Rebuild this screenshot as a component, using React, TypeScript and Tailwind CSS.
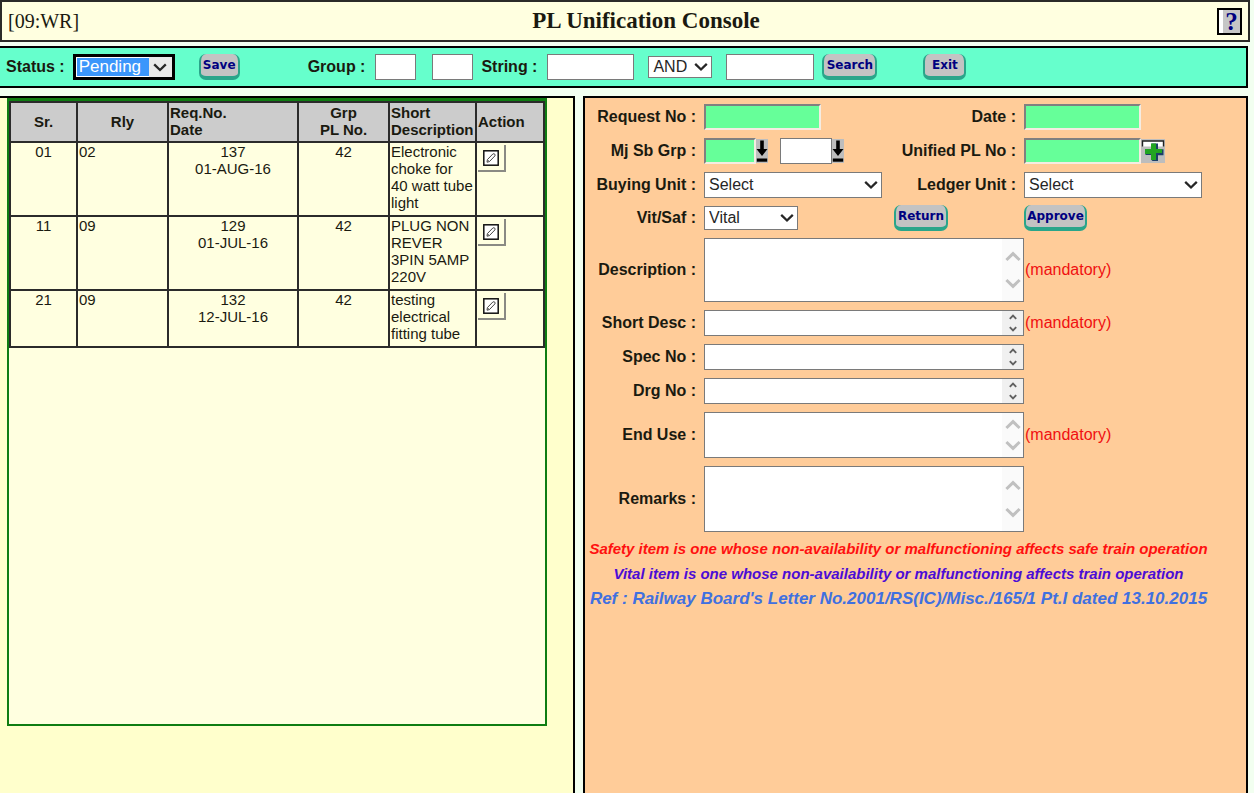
import React from "react";

const fieldBase = "border border-[#7a7a7a] bg-white px-1 outline-none";
const sunken =
  "border-2 border-t-[#808080] border-l-[#808080] border-b-[#f5ece2] border-r-[#f5ece2] bg-[#66ff99] px-1 outline-none";

function Chevron({ className }: { className: string }) {
  return (
    <svg viewBox="0 0 14 9" className={className} fill="none" stroke="#262626" strokeWidth="2.3" aria-hidden="true">
      <path d="M1.2 1.4 7 7l5.8-5.6" />
    </svg>
  );
}

function Select({
  label,
  id,
  options,
  box,
}: {
  label?: string;
  id: string;
  options: string[];
  box: string;
}) {
  return (
    <div className={`relative ${box}`}>
      <select
        id={id}
        aria-label={label}
        className="block h-full w-full appearance-none border border-[#7a7a7a] bg-white pr-6 pl-1 text-[16px] leading-5 text-[#262626] outline-none"
      >
        {options.map((o) => (
          <option key={o}>{o}</option>
        ))}
      </select>
      <Chevron className="pointer-events-none absolute top-1/2 right-1 h-[9px] w-[14px] -translate-y-1/2" />
    </div>
  );
}

function PushButton({ children, className = "" }: { children: string; className?: string }) {
  return (
    <button
      type="button"
      className={`h-[26px] rounded-[7px] border-r-2 border-b-4 border-l-2 border-[#2aa58a] bg-[#c3c3c3] pt-px text-center font-['DejaVu_Sans',sans-serif] text-[12px] leading-[21px] font-bold text-[#000080] ${className}`}
    >
      {children}
    </button>
  );
}

function ScrollArea({ id, box, small = false }: { id: string; box: string; small?: boolean }) {
  return (
    <div className={`relative col-span-2 ${box}`}>
      <textarea
        id={id}
        className="block h-full w-full resize-none overflow-hidden border border-[#7a7a7a] bg-white py-0.5 pr-6 pl-1 text-[16px] leading-5 outline-none"
      />
      <div
        className={`pointer-events-none absolute inset-y-px right-px flex w-[21px] flex-col items-center ${
          small ? "justify-between bg-[#f0f0f0] py-[3px]" : "justify-evenly gap-1 bg-[#fafafa]"
        }`}
      >
        {small ? (
          <>
            <svg viewBox="0 0 8 6" className="h-[6px] w-[8px]" fill="none" stroke="#606060" strokeWidth="1.9" aria-hidden="true">
              <path d="M.8 4.8 4 1.6l3.2 3.2" />
            </svg>
            <svg viewBox="0 0 8 6" className="h-[6px] w-[8px]" fill="none" stroke="#606060" strokeWidth="1.9" aria-hidden="true">
              <path d="M.8 1.2 4 4.4l3.2-3.2" />
            </svg>
          </>
        ) : (
          <>
            <svg viewBox="0 0 16 11" className="h-[11px] w-[16px]" fill="none" stroke="#c0c0c0" strokeWidth="3" aria-hidden="true">
              <path d="M1.4 9 8 2.6 14.6 9" />
            </svg>
            <svg viewBox="0 0 16 11" className="h-[11px] w-[16px]" fill="none" stroke="#c0c0c0" strokeWidth="3" aria-hidden="true">
              <path d="M1.4 2 8 8.4 14.6 2" />
            </svg>
          </>
        )}
      </div>
    </div>
  );
}

function PickButton({ label }: { label: string }) {
  return (
    <button type="button" aria-label={label} className="h-[24px] w-[12px] bg-[#bdbdbd]">
      <svg viewBox="0 0 12 24" className="block h-[24px] w-[12px]" fill="#000" aria-hidden="true">
        <path d="M4.200 1.500h3.600V10H11.500L6 17 .5 10h3.700z" />
        <path d="M.800 19.500h10.400v3.200H.8z" />
      </svg>
    </button>
  );
}

function Label({ htmlFor, children }: { htmlFor: string; children: string }) {
  return (
    <label htmlFor={htmlFor} className="pr-2 text-right font-bold whitespace-nowrap">
      {children} :
    </label>
  );
}

const Mandatory = () => <span className="pl-px text-[#f01010]">(mandatory)</span>;

const rows = [
  { sr: "01", rly: "02", req: "137", date: "01-AUG-16", grp: "42", desc: ["Electronic", "choke for", "40 watt tube", "light"] },
  { sr: "11", rly: "09", req: "129", date: "01-JUL-16", grp: "42", desc: ["PLUG NON", "REVER", "3PIN 5AMP", "220V"] },
  { sr: "21", rly: "09", req: "132", date: "12-JUL-16", grp: "42", desc: ["testing", "electrical", "fitting tube"] },
];

const cell = "border-2 border-[#2b2b2b] px-px pb-1 pt-0 align-top";
const head = "border-2 border-[#2b2b2b] px-px pt-px pb-[3px] font-bold";

export default function App() {
  return (
    <div className="flex min-h-screen flex-col bg-[#f2fff0] font-['Liberation_Sans',Arial,sans-serif] text-[16px] leading-5 text-[#1a1a10]">
      <header className="mr-1 flex h-[42px] items-center border-2 border-[#2b2b28] bg-[#ffffe0] pr-1.5 pl-1.5 font-['Liberation_Serif',serif]">
        <span className="flex-1 text-[20px]">[09:WR]</span>
        <h1 className="ml-[42px] text-[23px] font-bold text-[#1a1a10]">PL Unification Console</h1>
        <div className="flex flex-1 justify-end">
          <button
            type="button"
            aria-label="Help"
            className="flex h-[27px] w-[25px] border-2 border-black bg-white pl-1"
          >
            <span className="h-full flex-1 bg-[#c6c6c6] text-center text-[25px] leading-[23px] font-bold text-[#000080]">?</span>
          </button>
        </div>
      </header>

      <form
        className="mt-1 mr-1.5 flex h-[42px] items-center border-y-2 border-r-2 border-black bg-[#66ffcc] pl-1.5 font-bold"
        onSubmit={(e) => e.preventDefault()}
      >
        <label htmlFor="status">Status :</label>
        <div className="relative ml-2 h-[26px] w-[102px] border-[3px] border-black bg-white p-px">
          <select
            id="status"
            className="block h-full w-[72px] appearance-none bg-[#3b96fb] pl-0.5 text-[17px] leading-[18px] font-normal text-white outline-none"
          >
            <option>Pending</option>
          </select>
          <div className="pointer-events-none absolute inset-y-0 right-0 flex w-[23px] items-center justify-center bg-[#e9e9e9]">
            <Chevron className="h-[9px] w-[14px]" />
          </div>
        </div>
        <PushButton className="ml-6 w-[41px]">Save</PushButton>
        <label htmlFor="group" className="ml-[68px]">Group :</label>
        <input id="group" type="text" className={`${fieldBase} ml-2.5 h-[26px] w-[41px]`} />
        <input aria-label="Sub group" type="text" className={`${fieldBase} ml-4 h-[26px] w-[41px]`} />
        <label htmlFor="string" className="ml-2">String :</label>
        <input id="string" type="text" className={`${fieldBase} ml-2.5 h-[26px] w-[87px]`} />
        <Select id="operator" label="Operator" options={["AND", "OR"]} box="ml-3.5 h-[22px] w-[64px] font-normal" />
        <input aria-label="Second string" type="text" className={`${fieldBase} ml-3.5 h-[26px] w-[88px]`} />
        <PushButton className="ml-2 w-[55px]">Search</PushButton>
        <PushButton className="ml-[46px] w-[43px]">Exit</PushButton>
      </form>

      <main className="mt-2 mr-1.5 grid flex-1 grid-cols-[575fr_665fr] gap-2">
        <section className="border-t-2 border-r-2 border-black bg-[#ffffcc] pl-[7px]">
          <div className="min-h-[628px] w-[540px] max-w-full border-2 border-t-[3px] border-[#0f7d12] bg-[#ffffe0]">
            <table className="w-full table-fixed border-collapse text-[15px] leading-[17px]">
              <colgroup>
                <col className="w-[67px]" />
                <col className="w-[91px]" />
                <col className="w-[130px]" />
                <col className="w-[91px]" />
                <col className="w-[87px]" />
                <col />
              </colgroup>
              <thead className="bg-[#cccccc]">
                <tr>
                  <th className={`${head} text-center`}>Sr.</th>
                  <th className={`${head} text-center`}>Rly</th>
                  <th className={`${head} text-left`}>Req.No.<br />Date</th>
                  <th className={`${head} text-center`}>Grp<br />PL No.</th>
                  <th className={`${head} text-left`}>Short<br />Description</th>
                  <th className={`${head} text-left`}>Action</th>
                </tr>
              </thead>
              <tbody>
                {rows.map((r) => (
                  <tr key={r.sr}>
                    <td className={`${cell} text-center`}>{r.sr}</td>
                    <td className={cell}>{r.rly}</td>
                    <td className={`${cell} text-center`}>{r.req}<br />{r.date}</td>
                    <td className={`${cell} text-center`}>{r.grp}</td>
                    <td className={`${cell} whitespace-nowrap`}>
                      {r.desc.map((d) => (
                        <div key={d}>{d}</div>
                      ))}
                    </td>
                    <td className={cell}>
                      <button
                        type="button"
                        aria-label={`Edit request ${r.req}`}
                        className="mt-0.5 flex h-[27px] w-[28px] items-center justify-center border-r-2 border-b-2 border-[#8a8a84]"
                      >
                        <svg viewBox="0 0 16 16" className="h-[16px] w-[16px]" fill="none" aria-hidden="true">
                          <rect x="0.800" y="0.800" width="14.400" height="14.400" fill="#fff" stroke="#111" strokeWidth="1.500" />
                          <path d="M4 12.200l.4-2.600 5.400-5.600q1.200-.7 2 .2.700.9 0 1.800l-5.400 5.600z" stroke="#444" strokeWidth="1" />
                          <path d="M4.500 9.700l2 1.900" stroke="#555" strokeWidth=".8" />
                        </svg>
                      </button>
                    </td>
                  </tr>
                ))}
              </tbody>
            </table>
          </div>
        </section>

        <section className="border-x-2 border-t-2 border-black bg-[#ffcc99]">
          <form
            className="grid grid-cols-[119px_180px_140px_1fr] items-center gap-y-2 pt-1.5"
            onSubmit={(e) => e.preventDefault()}
          >
            <Label htmlFor="request">Request No</Label>
            <input id="request" type="text" className={`${sunken} h-[26px] w-[117px]`} />
            <Label htmlFor="date">Date</Label>
            <input id="date" type="text" className={`${sunken} h-[26px] w-[117px]`} />

            <Label htmlFor="major">Mj Sb Grp</Label>
            <div className="flex items-center">
              <input id="major" type="text" className={`${sunken} h-[26px] w-[52px]`} />
              <PickButton label="Pick major group" />
              <input aria-label="Sub group code" type="text" className={`${fieldBase} ml-3 h-[26px] w-[52px]`} />
              <PickButton label="Pick sub group" />
            </div>
            <Label htmlFor="unified">Unified PL No</Label>
            <div className="flex items-center">
              <input id="unified" type="text" className={`${sunken} h-[26px] w-[117px]`} />
              <button type="button" aria-label="Add PL number" className="h-[24px] w-[24px] bg-[#bdbdbd]">
                <svg viewBox="0 0 24 24" className="block h-[24px] w-[24px]" aria-hidden="true">
                  <path d="M1.500 7.500V2h21v5.500" fill="#fff" stroke="#222" strokeWidth="1.400" />
                  <path d="M10.500 4.500H17v5.700h5.500v6H17V22h-5.500l-1-1v-5H5l-1-1v-5h6.500z" fill="#1c3f66" />
                  <path d="M10 4.500h5v5.500h6v4h-6v7h-5v-6H4v-5h6z" fill="#22a522" />
                </svg>
              </button>
            </div>

            <Label htmlFor="buying">Buying Unit</Label>
            <Select id="buying" options={["Select"]} box="h-[26px] w-[178px]" />
            <Label htmlFor="ledger">Ledger Unit</Label>
            <Select id="ledger" options={["Select"]} box="h-[26px] w-[178px]" />

            <Label htmlFor="vital">Vit/Saf</Label>
            <Select id="vital" options={["Vital", "Safety"]} box="h-[24px] w-[94px]" />
            <div className="pl-[10px]">
              <PushButton className="-my-px block w-[54px]">Return</PushButton>
            </div>
            <PushButton className="-my-px w-[63px]">Approve</PushButton>

            <Label htmlFor="description">Description</Label>
            <ScrollArea id="description" box="h-[64px]" />
            <Mandatory />

            <Label htmlFor="short">Short Desc</Label>
            <ScrollArea id="short" box="h-[26px]" small />
            <Mandatory />

            <Label htmlFor="spec">Spec No</Label>
            <ScrollArea id="spec" box="h-[26px]" small />
            <span />

            <Label htmlFor="drawing">Drg No</Label>
            <ScrollArea id="drawing" box="h-[26px]" small />
            <span />

            <Label htmlFor="enduse">End Use</Label>
            <ScrollArea id="enduse" box="h-[46px]" />
            <Mandatory />

            <Label htmlFor="remarks">Remarks</Label>
            <ScrollArea id="remarks" box="h-[66px]" />
            <span />
          </form>

          <div className="mt-1 pr-[34px] text-center text-[15px] leading-[25px] font-bold whitespace-nowrap italic">
            <p className="text-[#ff1010]">Safety item is one whose non-availability or malfunctioning affects safe train operation</p>
            <p className="text-[#4b0cd6]">Vital item is one whose non-availability or malfunctioning affects train operation</p>
            <p className="text-[17px] text-[#4070e0]">Ref : Railway Board's Letter No.2001/RS(IC)/Misc./165/1 Pt.I dated 13.10.2015</p>
          </div>
        </section>
      </main>
    </div>
  );
}
